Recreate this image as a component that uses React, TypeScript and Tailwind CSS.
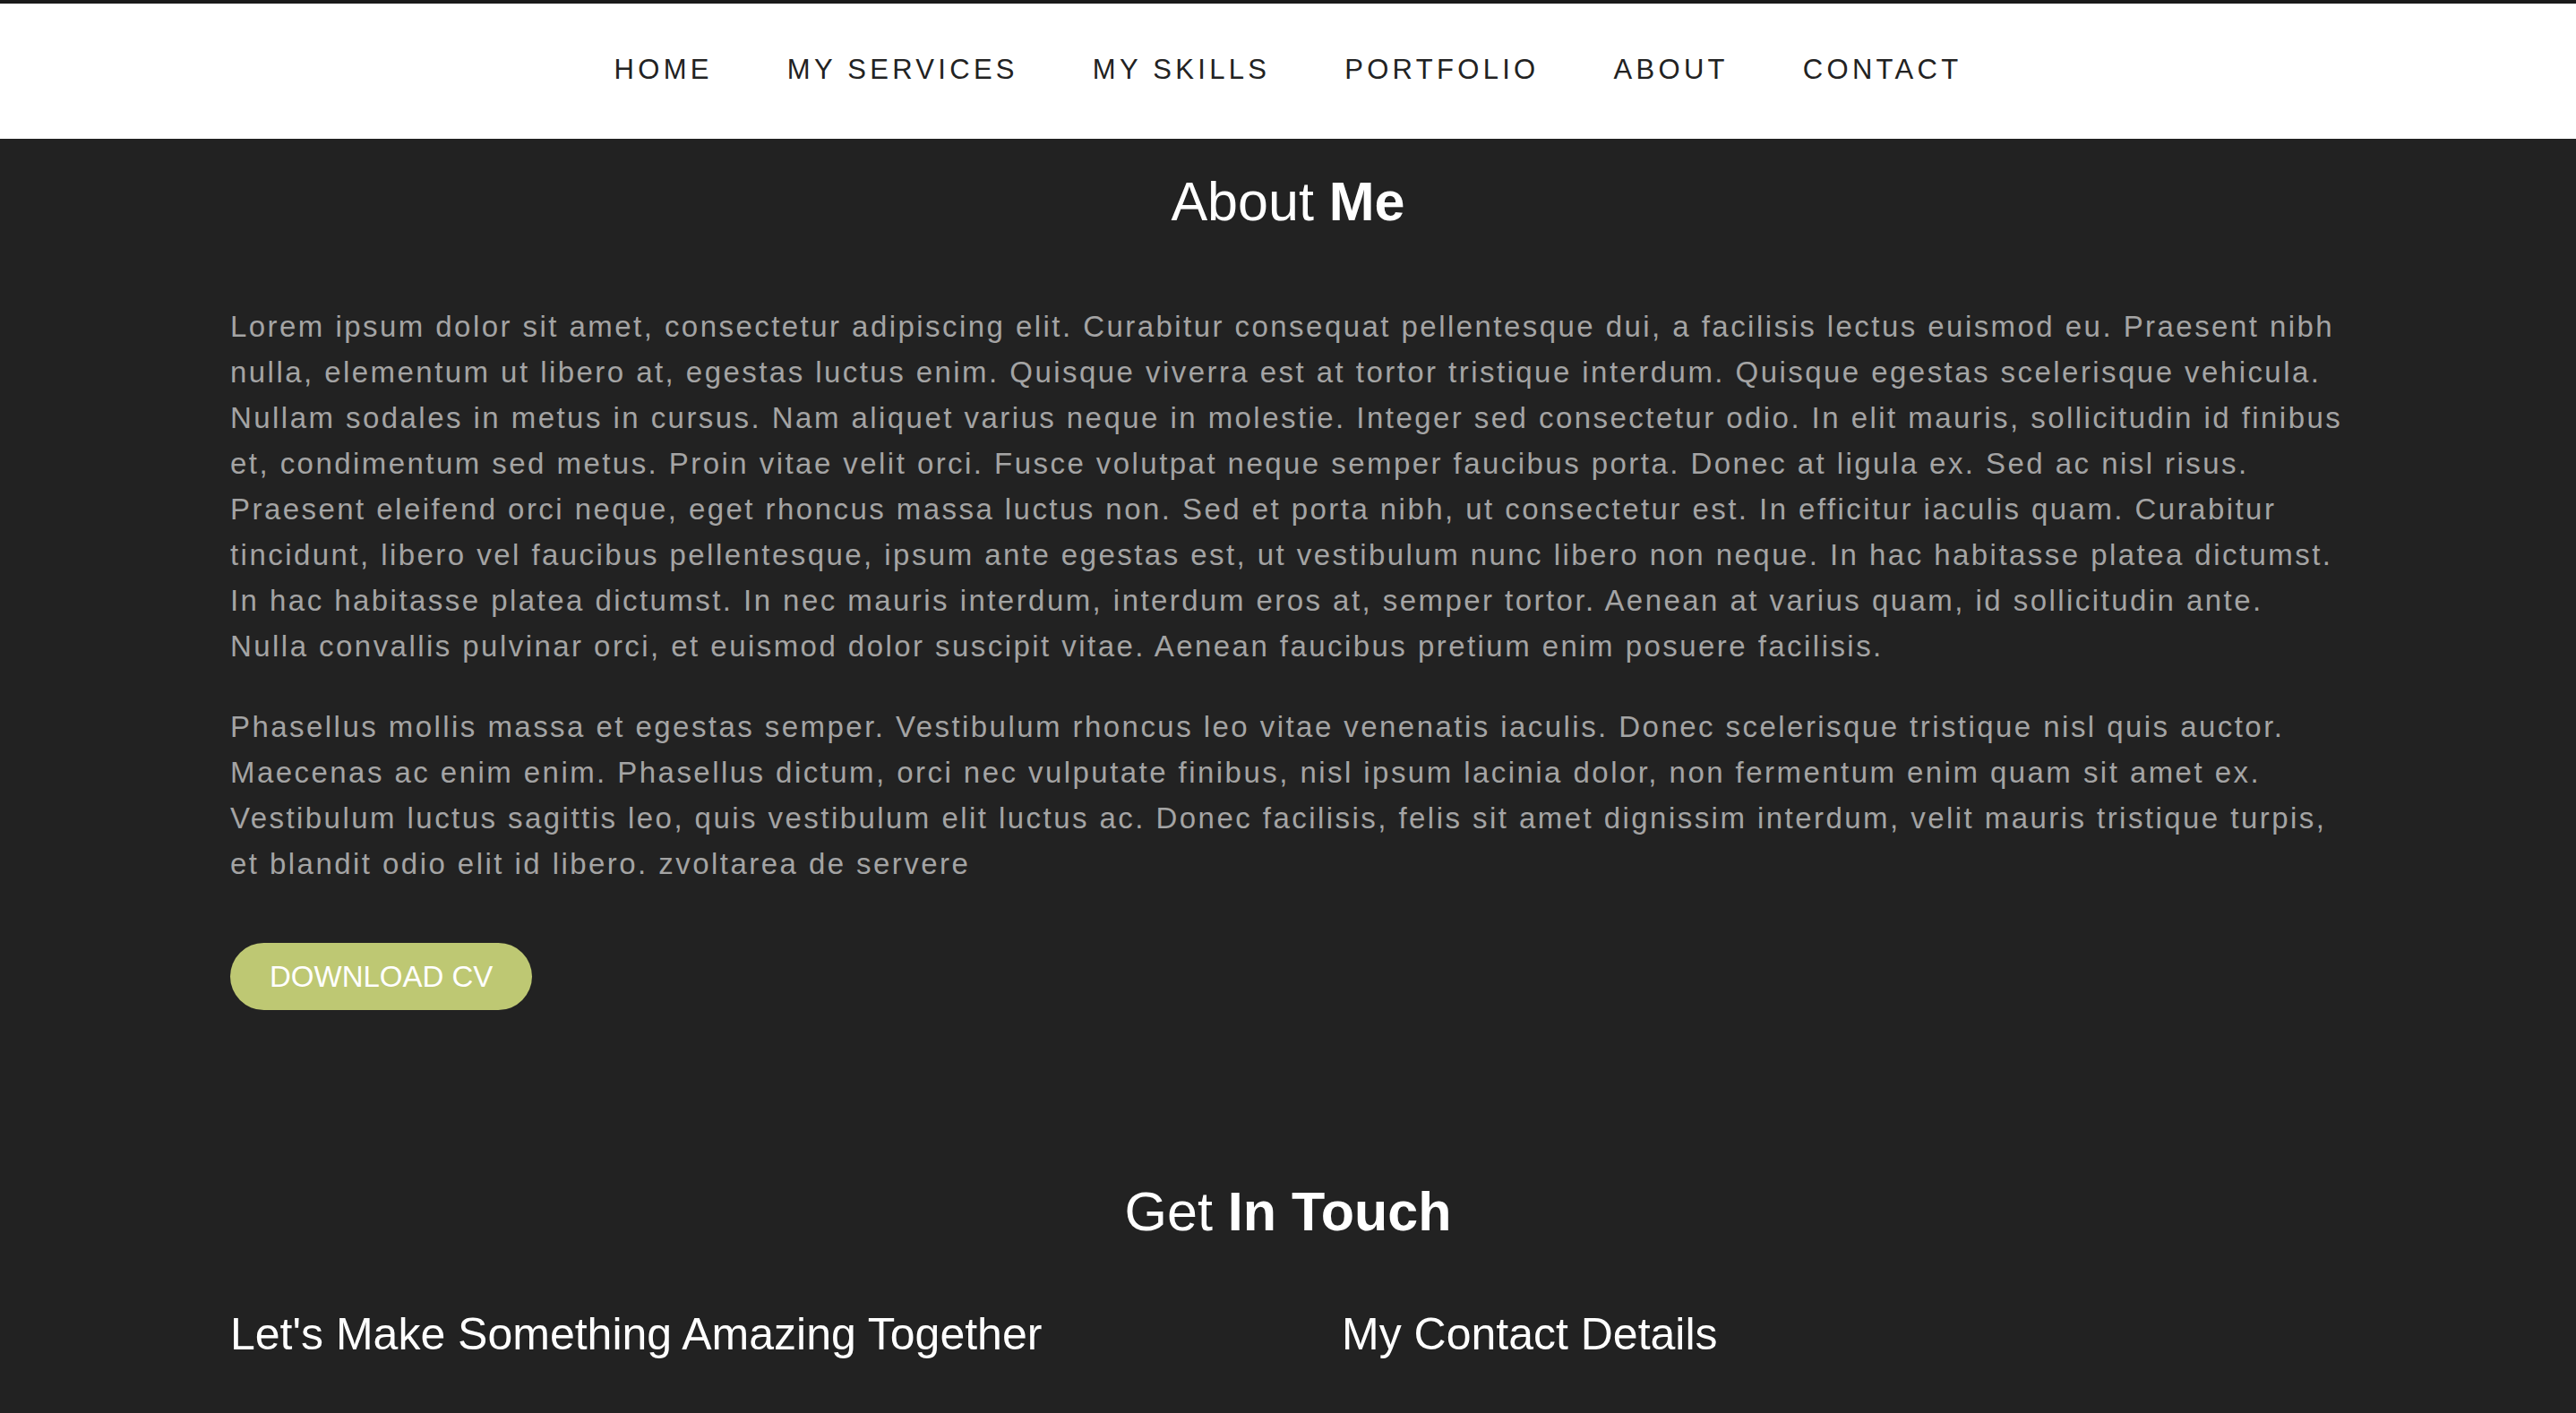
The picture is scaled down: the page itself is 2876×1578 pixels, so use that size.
import React from 'react';

const navItems: string[] = ['HOME', 'MY SERVICES', 'MY SKILLS', 'PORTFOLIO', 'ABOUT', 'CONTACT'];

const App: React.FC = () => {
  return (
    <div className="min-h-screen bg-[#222222] font-['Liberation_Sans',Arial,sans-serif]">
      <div className="h-[4px] bg-[#1a1a1a]" />
      <nav className="h-[151px] bg-white flex items-center justify-center gap-[83px] pb-[4px]">
        {navItems.map((item) => (
          <a key={item} href="#" className="text-[31px] tracking-[4.3px] text-[#222222] leading-none">
            {item}
          </a>
        ))}
      </nav>

      <section className="px-[257px] pt-[40px]">
        <h2 className="text-center text-[61px] leading-none text-white">
          About <span className="font-bold">Me</span>
        </h2>
        <p className="mt-[83px] text-[33px] leading-[51px] tracking-[2.45px] text-[#a4a4a4]">
          Lorem ipsum dolor sit amet, consectetur adipiscing elit. Curabitur consequat pellentesque dui, a facilisis
          lectus euismod eu. Praesent nibh nulla, elementum ut libero at, egestas luctus enim. Quisque viverra est at
          tortor tristique interdum. Quisque egestas scelerisque vehicula. Nullam sodales in metus in cursus. Nam
          aliquet varius neque in molestie. Integer sed consectetur odio. In elit mauris, sollicitudin id finibus et,
          condimentum sed metus. Proin vitae velit orci. Fusce volutpat neque semper faucibus porta. Donec at ligula ex.
          Sed ac nisl risus. Praesent eleifend orci neque, eget rhoncus massa luctus non. Sed et porta nibh, ut
          consectetur est. In efficitur iaculis quam. Curabitur tincidunt, libero vel faucibus pellentesque, ipsum ante
          egestas est, ut vestibulum nunc libero non neque. In hac habitasse platea dictumst. In hac habitasse platea
          dictumst. In nec mauris interdum, interdum eros at, semper tortor. Aenean at varius quam, id sollicitudin
          ante. Nulla convallis pulvinar orci, et euismod dolor suscipit vitae. Aenean faucibus pretium enim posuere
          facilisis.
        </p>
        <p className="mt-[39px] text-[33px] leading-[51px] tracking-[2.45px] text-[#a4a4a4]">
          Phasellus mollis massa et egestas semper. Vestibulum rhoncus leo vitae venenatis iaculis. Donec scelerisque
          tristique nisl quis auctor. Maecenas ac enim enim. Phasellus dictum, orci nec vulputate finibus, nisl ipsum
          lacinia dolor, non fermentum enim quam sit amet ex. Vestibulum luctus sagittis leo, quis vestibulum elit
          luctus ac. Donec facilisis, felis sit amet dignissim interdum, velit mauris tristique turpis, et blandit odio
          elit id libero. zvoltarea de servere
        </p>
        <button className="mt-[63px] h-[75px] px-[44px] rounded-full bg-[#bec873] text-white text-[33px] leading-none flex items-center">
          DOWNLOAD CV
        </button>
      </section>

      <section className="px-[257px] pt-[195px]">
        <h2 className="text-center text-[61px] leading-none text-white">
          Get <span className="font-bold">In Touch</span>
        </h2>
        <div className="mt-[81px] grid grid-cols-2 gap-x-[120px]">
          <h3 className="text-[50px] leading-none text-white">Let's Make Something Amazing Together</h3>
          <h3 className="text-[50px] leading-none text-white">My Contact Details</h3>
        </div>
      </section>
    </div>
  );
};

export default App;
